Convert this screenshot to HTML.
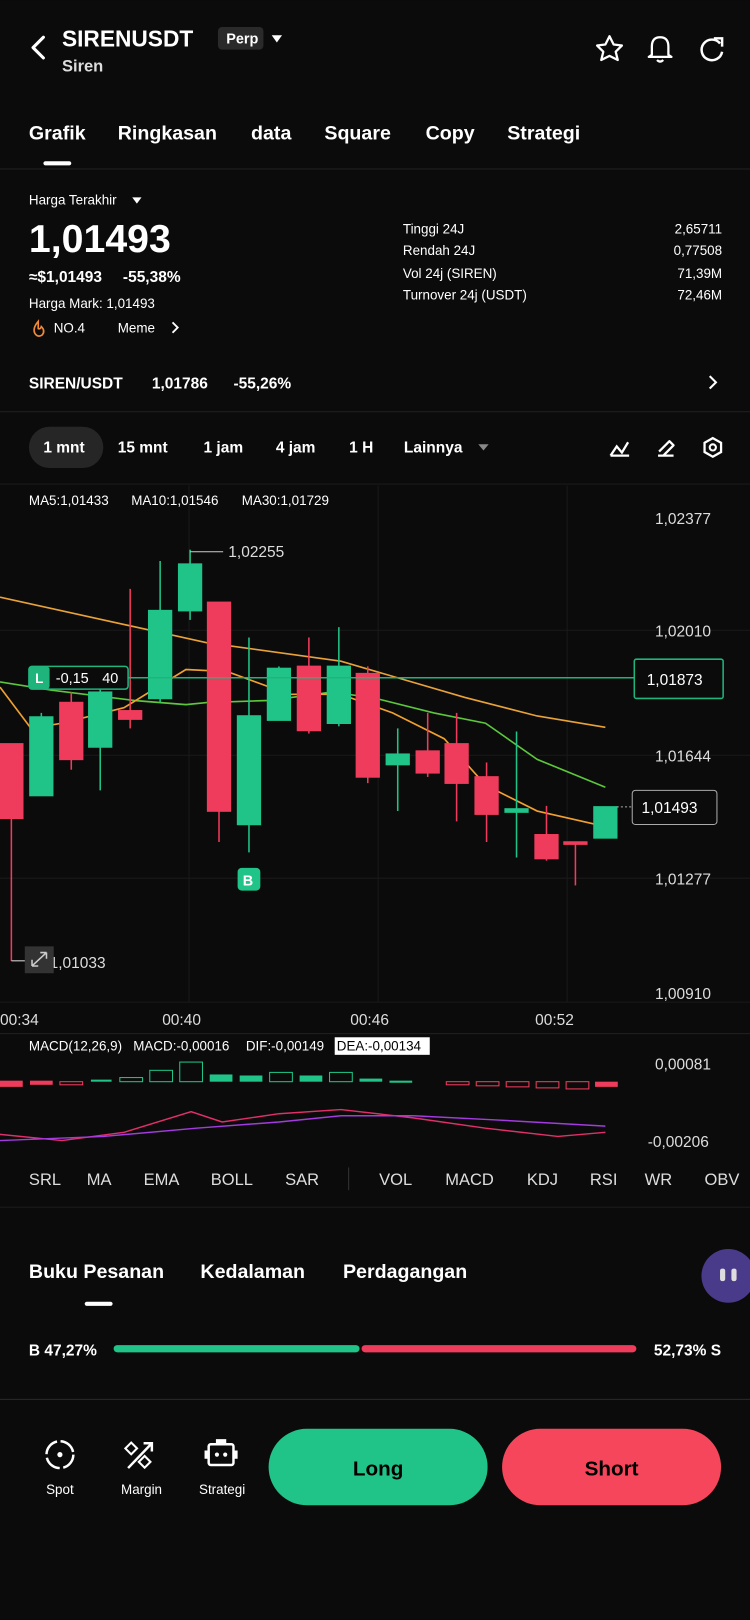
<!DOCTYPE html>
<html><head><meta charset="utf-8"><style>
html,body{margin:0;padding:0;background:#0b0b0b;width:750px;height:1620px;overflow:hidden}
svg{display:block}
text{font-family:"Liberation Sans",sans-serif}
</style></head><body>
<svg width="750" height="1620" viewBox="0 0 726 1568" xmlns="http://www.w3.org/2000/svg" fill="#fff">
<rect width="726" height="1568" fill="#0b0b0b"/>
<path d="M42 36 L32 46 L42 56" stroke="#fff" stroke-width="3" fill="none" stroke-linecap="round" stroke-linejoin="round"/>
<text x="60" y="45" font-size="22" font-weight="bold">SIRENUSDT</text>
<rect x="211" y="26" width="44" height="22" rx="4" fill="#2a2a2a"/>
<text x="219" y="42" font-size="14" font-weight="bold">Perp</text>
<path d="M263 34 L273 34 L268 41Z" fill="#fff"/>
<text x="60" y="69" font-size="16" font-weight="bold" fill="#ddd">Siren</text>
<path d="M590 35 L594 43 L602 44 L596 50 L598 58 L590 54 L582 58 L584 50 L578 44 L586 43Z" stroke="#fff" stroke-width="2.2" fill="none" stroke-linejoin="round"/>
<path d="M631 53 L631 45 Q631 36 639 36 Q647 36 647 45 L647 53 L650 55 L628 55Z M636 58 Q639 61 642 58" stroke="#fff" stroke-width="2.2" fill="none" stroke-linejoin="round"/>
<path d="M697 42 A10 10 0 1 0 699 50" stroke="#fff" stroke-width="2.4" fill="none"/>
<path d="M691 37 L699 37 L699 45" stroke="#fff" stroke-width="2.4" fill="none"/>
<g font-size="19" font-weight="bold">
<text x="28" y="135">Grafik</text><text x="114" y="135">Ringkasan</text><text x="243" y="135">data</text><text x="314" y="135">Square</text><text x="412" y="135">Copy</text><text x="491" y="135">Strategi</text></g>
<rect x="42" y="156" width="27" height="4" rx="2" fill="#fff"/>
<rect x="0" y="163" width="726" height="1" fill="#222"/>
<text x="28" y="198" font-size="13">Harga Terakhir</text>
<path d="M128 191 L137 191 L132.5 197Z" fill="#fff"/>
<text x="28" y="244" font-size="38" font-weight="bold">1,01493</text>
<text x="28" y="273" font-size="15" font-weight="bold">≈$1,01493</text><text x="119" y="273" font-size="15" font-weight="bold">-55,38%</text>
<text x="28" y="298" font-size="13">Harga Mark: 1,01493</text>
<path d="M37 311 Q31 318 34 323 Q37 327 41 324 Q44 320 40 316 Q39 319 37 318 Q37 314 37 311Z" stroke="#f08a3a" stroke-width="1.6" fill="none"/>
<text x="52" y="322" font-size="13">NO.4</text>
<text x="114" y="322" font-size="13">Meme</text>
<path d="M167 312 L172 317 L167 322" stroke="#fff" stroke-width="1.8" fill="none"/>
<g font-size="13"><text x="390" y="226">Tinggi 24J</text><text x="390" y="247">Rendah 24J</text><text x="390" y="269">Vol 24j (SIREN)</text><text x="390" y="290">Turnover 24j (USDT)</text></g>
<g font-size="13" text-anchor="end"><text x="699" y="226">2,65711</text><text x="699" y="247">0,77508</text><text x="699" y="269">71,39M</text><text x="699" y="290">72,46M</text></g>
<g font-size="15" font-weight="bold"><text x="28" y="376">SIREN/USDT</text><text x="147" y="376">1,01786</text><text x="226" y="376">-55,26%</text></g>
<path d="M687 364 L693 370 L687 376" stroke="#fff" stroke-width="2" fill="none"/>
<rect x="0" y="398" width="726" height="1" fill="#222"/>
<rect x="28" y="413" width="72" height="40" rx="20" fill="#262626"/>
<g font-size="15" font-weight="bold"><text x="42" y="438">1 mnt</text><text x="114" y="438">15 mnt</text><text x="197" y="438">1 jam</text><text x="267" y="438">4 jam</text><text x="338" y="438">1 H</text><text x="391" y="438">Lainnya</text></g>
<path d="M463 430 L473 430 L468 436Z" fill="#888"/>
<path d="M591 441 L597 432 L602 438 L608 428 M591 441 L609 441" stroke="#fff" stroke-width="2.2" fill="none"/>
<path d="M637 441 L652 441 M638 437 L648 427 L652 431 L642 441" stroke="#fff" stroke-width="2.2" fill="none" stroke-linejoin="round"/>
<path d="M690 424 L698 428.5 L698 437.5 L690 442 L682 437.5 L682 428.5Z" stroke="#fff" stroke-width="2.2" fill="none"/><circle cx="690" cy="433" r="3" stroke="#fff" stroke-width="2" fill="none"/>
<rect x="0" y="468" width="726" height="1" fill="#1c1c1c"/>
<g stroke="#1a1a1a" stroke-width="1"><path d="M0 610 H726 M0 731 H726 M0 850 H726 M0 970 H726 M183 470 V970 M366 470 V970 M549 470 V970"/></g>
<g font-size="13"><text x="28" y="489">MA5:1,01433</text><text x="127" y="489">MA10:1,01546</text><text x="234" y="489">MA30:1,01729</text></g>
<g font-size="15" fill="#ddd"><text x="634" y="507">1,02377</text><text x="634" y="616">1,02010</text><text x="634" y="737">1,01644</text><text x="634" y="856">1,01277</text><text x="634" y="967">1,00910</text></g>
<polyline points="0,578 100,600 200,622 330,640 450,675 520,693 586,704" stroke="#e8a23a" stroke-width="1.6" fill="none"/>
<polyline points="0,660 50,668 130,678 180,682 200,680 260,678 320,670 360,675 420,690 470,700 520,735 586,762" stroke="#5cc63c" stroke-width="1.6" fill="none"/>
<polyline points="0,665 30,705 60,700 120,685 180,648 220,650 280,672 330,672 380,690 430,715 470,760 520,785 586,800" stroke="#f0a030" stroke-width="1.6" fill="none"/>
<g stroke-width="1.5">
<g stroke="#f03c5c" fill="#f03c5c">
<path d="M11 720 V930"/><rect x="0" y="720" width="22" height="72"/>
<path d="M69 670 V745"/><rect x="58" y="680" width="22" height="55"/>
<path d="M126 570 V705"/><rect x="115" y="688" width="22" height="8"/>
<path d="M212 583 V815"/><rect x="201" y="583" width="22" height="202"/>
<path d="M299 617 V710"/><rect x="288" y="645" width="22" height="62"/>
<path d="M356 645 V758"/><rect x="345" y="652" width="22" height="100"/>
<path d="M414 690 V752"/><rect x="403" y="727" width="22" height="21"/>
<path d="M442 690 V795"/><rect x="431" y="720" width="22" height="38"/>
<path d="M471 738 V815"/><rect x="460" y="752" width="22" height="36"/>
<path d="M529 780 V833"/><rect x="518" y="808" width="22" height="23"/>
<path d="M557 815 V857"/><rect x="546" y="815" width="22" height="2"/>
</g>
<g stroke="#20c489" fill="#20c489">
<path d="M40 690 V770"/><rect x="29" y="694" width="22" height="76"/>
<path d="M97 660 V765"/><rect x="86" y="670" width="22" height="53"/>
<path d="M155 543 V680"/><rect x="144" y="591" width="22" height="85"/>
<path d="M184 532 V600"/><rect x="173" y="546" width="22" height="45"/>
<path d="M241 617 V825"/><rect x="230" y="693" width="22" height="105"/>
<path d="M270 645 V697"/><rect x="259" y="647" width="22" height="50"/>
<path d="M328 607 V703"/><rect x="317" y="645" width="22" height="55"/>
<path d="M385 705 V785"/><rect x="374" y="730" width="22" height="10"/>
<path d="M500 708 V830"/><rect x="489" y="783" width="22" height="3"/>
<rect x="575" y="781" width="22" height="30"/>
</g></g>
<path d="M184 534 H216" stroke="#ccc" stroke-width="1"/><text x="221" y="539" font-size="15" fill="#ddd">1,02255</text>
<path d="M11 930 H44" stroke="#ccc" stroke-width="1"/><text x="48" y="937" font-size="15" fill="#ddd">1,01033</text>
<rect x="24" y="916" width="28" height="26" fill="#333"/><path d="M31 935 L45 922 M31 935 V929 M31 935 H37 M45 922 H39 M45 922 V928" stroke="#ccc" stroke-width="1.5" fill="none"/>
<path d="M30 656 H614" stroke="#1fb47c" stroke-width="1.5"/>
<rect x="28" y="645" width="96" height="22" rx="3" fill="#0b0b0b" stroke="#1fb47c" stroke-width="1.5"/>
<rect x="28" y="645" width="20" height="22" rx="3" fill="#1fb47c"/>
<text x="34" y="661" font-size="13" font-weight="bold">L</text><text x="54" y="661" font-size="14">-0,15</text><text x="99" y="661" font-size="14">40</text>
<rect x="614" y="638" width="86" height="38" rx="2" fill="#0b0b0b" stroke="#1fb47c" stroke-width="1.5"/>
<text x="626" y="663" font-size="15">1,01873</text>
<path d="M597 781 H612" stroke="#aaa" stroke-dasharray="2 2"/>
<rect x="612" y="765" width="82" height="33" rx="3" fill="#0b0b0b" stroke="#aaa" stroke-width="1"/>
<text x="621" y="787" font-size="15">1,01493</text>
<rect x="230" y="840" width="22" height="22" rx="4" fill="#20c489"/><text x="235" y="857" font-size="14" font-weight="bold">B</text>
<g font-size="15" fill="#ddd"><text x="0" y="992">00:34</text><text x="157" y="992">00:40</text><text x="339" y="992">00:46</text><text x="518" y="992">00:52</text></g>
<rect x="0" y="1000" width="726" height="1" fill="#222"/>
<g font-size="13"><text x="28" y="1017">MACD(12,26,9)</text><text x="129" y="1017">MACD:-0,00016</text><text x="238" y="1017">DIF:-0,00149</text></g>
<rect x="324" y="1004" width="92" height="17" fill="#fff"/><text x="326" y="1017" font-size="13" style="fill:#000">DEA:-0,00134</text>
<g font-size="15" fill="#ddd"><text x="634" y="1035">0,00081</text><text x="627" y="1110">-0,00206</text></g>
<g fill="#f03c5c"><rect x="0" y="1046" width="22" height="6"/><rect x="29" y="1046" width="22" height="4"/></g>
<g stroke="#f03c5c" fill="none"><rect x="58" y="1047" width="22" height="3"/><rect x="432" y="1047" width="22" height="3"/><rect x="461" y="1047" width="22" height="4"/><rect x="490" y="1047" width="22" height="5"/><rect x="519" y="1047" width="22" height="6"/><rect x="548" y="1047" width="22" height="7"/></g>
<rect x="576" y="1047" width="22" height="5" fill="#f03c5c"/>
<g stroke="#20c489" fill="none"><rect x="116" y="1043" width="22" height="4"/><rect x="145" y="1036" width="22" height="11"/><rect x="174" y="1028" width="22" height="19"/><rect x="261" y="1038" width="22" height="9"/><rect x="319" y="1038" width="22" height="9"/></g>
<g fill="#20c489"><rect x="88" y="1045" width="20" height="2"/><rect x="203" y="1040" width="22" height="7"/><rect x="232" y="1041" width="22" height="6"/><rect x="290" y="1041" width="22" height="6"/><rect x="348" y="1044" width="22" height="3"/><rect x="377" y="1046" width="22" height="2"/></g>
<polyline points="0,1098 60,1104 120,1096 185,1076 215,1086 270,1078 330,1074 400,1082 470,1092 540,1100 586,1096" stroke="#e0306a" stroke-width="1.4" fill="none"/>
<polyline points="0,1104 100,1100 190,1092 270,1086 330,1080 400,1080 480,1084 586,1090" stroke="#a33be0" stroke-width="1.4" fill="none"/>
<g font-size="16" fill="#ddd"><text x="28" y="1147">SRL</text><text x="84" y="1147">MA</text><text x="139" y="1147">EMA</text><text x="204" y="1147">BOLL</text><text x="276" y="1147">SAR</text><text x="367" y="1147">VOL</text><text x="431" y="1147">MACD</text><text x="510" y="1147">KDJ</text><text x="571" y="1147">RSI</text><text x="624" y="1147">WR</text><text x="682" y="1147">OBV</text></g>
<rect x="337" y="1130" width="1" height="22" fill="#333"/>
<rect x="0" y="1168" width="726" height="1" fill="#1c1c1c"/>
<g font-size="19" font-weight="bold"><text x="28" y="1237">Buku Pesanan</text><text x="194" y="1237">Kedalaman</text><text x="332" y="1237">Perdagangan</text></g>
<rect x="82" y="1260" width="27" height="4" rx="2" fill="#fff"/>
<circle cx="705" cy="1235" r="26" fill="#4a3a8a"/><rect x="697" y="1228" width="5" height="12" rx="2" fill="#ddd"/><rect x="708" y="1228" width="5" height="12" rx="2" fill="#ddd"/>
<text x="28" y="1312" font-size="15" font-weight="bold">B 47,27%</text>
<rect x="110" y="1302" width="238" height="7" rx="3.5" fill="#20c489"/>
<rect x="350" y="1302" width="266" height="7" rx="3.5" fill="#f03c5c"/>
<text x="698" y="1312" font-size="15" font-weight="bold" text-anchor="end">52,73% S</text>
<rect x="0" y="1355" width="726" height="213" fill="#0b0b0b"/>
<rect x="0" y="1354" width="726" height="1" fill="#2a2a2a"/>
<circle cx="58" cy="1408" r="13" stroke="#fff" stroke-width="2.4" fill="none" stroke-dasharray="17 3.5"/><circle cx="58" cy="1408" r="2.5" fill="#fff"/>
<text x="58" y="1446" font-size="13" text-anchor="middle">Spot</text>
<path d="M124 1421 L147 1397 M139 1397 L147 1397 L147 1405" stroke="#fff" stroke-width="2.4" fill="none"/>
<rect x="123" y="1398" width="8" height="8" transform="rotate(45 127 1402)" stroke="#fff" stroke-width="2" fill="none"/>
<rect x="136" y="1411" width="8" height="8" transform="rotate(45 140 1415)" stroke="#fff" stroke-width="2" fill="none"/>
<text x="137" y="1446" font-size="13" text-anchor="middle">Margin</text>
<rect x="202" y="1398" width="24" height="20" rx="2" stroke="#fff" stroke-width="2.4" fill="none"/><rect x="209" y="1393" width="10" height="4" fill="#fff"/><circle cx="210" cy="1408" r="2" fill="#fff"/><circle cx="218" cy="1408" r="2" fill="#fff"/><rect x="198" y="1404" width="3" height="8" fill="#fff"/><rect x="227" y="1404" width="3" height="8" fill="#fff"/>
<text x="215" y="1446" font-size="13" text-anchor="middle">Strategi</text>
<rect x="260" y="1383" width="212" height="74" rx="37" fill="#20c489"/>
<text x="366" y="1428" font-size="20" font-weight="bold" text-anchor="middle" style="fill:#000">Long</text>
<rect x="486" y="1383" width="212" height="74" rx="37" fill="#f5465c"/>
<text x="592" y="1428" font-size="20" font-weight="bold" text-anchor="middle" style="fill:#000">Short</text>
</svg>
</body></html>
